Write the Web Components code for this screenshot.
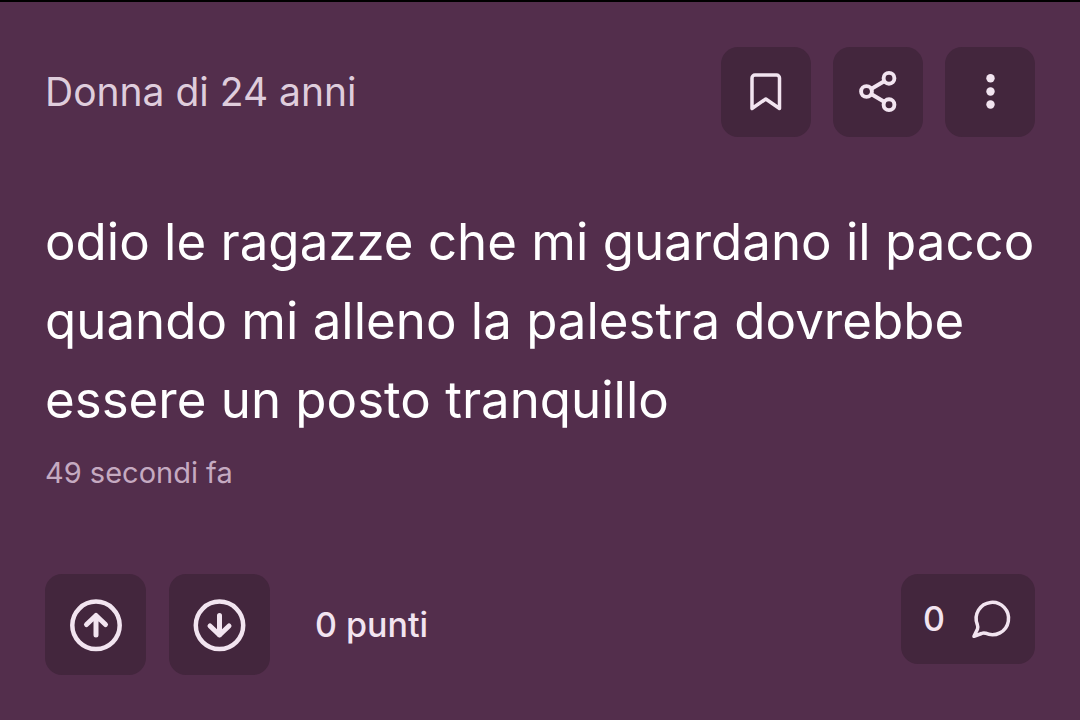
<!DOCTYPE html>
<html lang="it">
<head>
<meta charset="utf-8">
<meta name="viewport" content="width=device-width, initial-scale=1">
<title>Donna di 24 anni</title>
<style>
    body {
        margin: 0;
        min-height: 100vh;
        background: #532e4c;
        color: #fff;
        font-family: Inter, "Liberation Sans", sans-serif;
    }
</style>
</head>
<body>
<post-card>
    <span slot="author">Donna di 24 anni</span>
    <icon-button slot="actions" icon="bookmark" label="Salva"></icon-button>
    <icon-button slot="actions" icon="share" label="Condividi"></icon-button>
    <icon-button slot="actions" icon="more" label="Altro"></icon-button>
    odio le ragazze che mi guardano il pacco quando mi alleno la palestra dovrebbe essere un posto tranquillo
    <time slot="time">49 secondi fa</time>
    <vote-bar slot="votes" points="0"></vote-bar>
    <icon-button slot="comments" icon="comment" label="Commenti">0</icon-button>
</post-card>

<script>
// inner markup of every icon, with the size of its box
const icons = {
    bookmark: { size: 46, body: '<path d="M9 39.500V9a3 3 0 0 1 3-3h21.500a3 3 0 0 1 3 3V39.500L22.800 30z"/>' },
    share: { size: 46, body: '<g stroke-width="3.900"><circle cx="34" cy="9.300" r="5.400"/><circle cx="11.500" cy="22.500" r="5.400"/><circle cx="34" cy="35.700" r="5.400"/><path d="M16.500 19.700l12.700-7.500M16.500 25.300l12.700 7.500"/></g>' },
    more: { size: 46, body: '<g fill="currentColor" stroke="none"><circle cx="23.500" cy="9.300" r="4.200"/><circle cx="23.500" cy="22.500" r="4.200"/><circle cx="23.500" cy="35.500" r="4.200"/></g>' },
    comment: { size: 46, body: '<path d="M10.300 28.500A16.200 16.200 0 1 1 18.500 37.200Q16.500 36.600 14.500 37.500L7 40.300L10.500 33Q11.200 31 10.300 28.500z"/>' },
    up: { size: 56, body: '<g stroke-width="4.500"><circle cx="28" cy="28.300" r="23.700"/><path stroke-width="5" d="M28 38V18.500M18.500 27.500L28 18.500l9.500 9"/></g>' },
    down: { size: 56, body: '<g stroke-width="4.500"><circle cx="27.500" cy="28.300" r="23.700"/><path stroke-width="5" d="M27.500 18.500v19.500M18 29l9.500 9l9.500-9"/></g>' }
};

const buttonTemplate = document.createElement('template');
buttonTemplate.innerHTML = `
    <style>
        :host {
            display: block;
        }
        button {
            display: flex;
            align-items: center;
            justify-content: center;
            gap: 22px;
            box-sizing: border-box;
            min-width: 90px;
            height: 90px;
            padding: 0 22px;
            border: none;
            border-radius: 17px;
            background: #43263d;
            color: #f2e4f0;
            font: 500 34px/40px Inter, "Liberation Sans", sans-serif;
            cursor: pointer;
        }
        :host([large]) button {
            min-width: 101px;
            height: 101px;
        }
        svg {
            display: block;
            flex: none;
            fill: none;
            stroke: currentColor;
            stroke-width: 3.500;
            stroke-linecap: round;
            stroke-linejoin: round;
        }
    </style>
    <button type="button"><slot></slot><svg aria-hidden="true"></svg></button>`;

class IconButton extends HTMLElement {
    constructor () {
        super();
        this._shadowRoot = this.attachShadow({ mode: 'open' });
        this._shadowRoot.appendChild(buttonTemplate.content.cloneNode(true));
        this.buttonNode = this._shadowRoot.querySelector('button');
        this.svgNode = this._shadowRoot.querySelector('svg');
    }
    static get observedAttributes () {
        return ['icon', 'label'];
    }
    attributeChangedCallback (name, oldVal, newVal) {
        switch (name) {
            case 'icon': {
                const icon = icons[newVal];
                this.svgNode.setAttribute('width', icon.size);
                this.svgNode.setAttribute('height', icon.size);
                this.svgNode.setAttribute('viewBox', `0 0 ${icon.size} ${icon.size}`);
                this.svgNode.innerHTML = icon.body;
                break;
            }
            case 'label':
                this.buttonNode.setAttribute('aria-label', newVal);
                break;
        }
    }
}

const voteTemplate = document.createElement('template');
voteTemplate.innerHTML = `
    <style>
        :host {
            display: flex;
            align-items: center;
            gap: 23px;
        }
        output {
            margin-left: 22px;
            color: #f2e4f0;
            font-size: 34px;
            font-weight: 500;
            line-height: 40px;
        }
    </style>
    <icon-button large icon="up" label="Vota a favore"></icon-button>
    <icon-button large icon="down" label="Vota contro"></icon-button>
    <output></output>`;

class VoteBar extends HTMLElement {
    constructor () {
        super();
        this._shadowRoot = this.attachShadow({ mode: 'open' });
        this._shadowRoot.appendChild(voteTemplate.content.cloneNode(true));
        this.outputNode = this._shadowRoot.querySelector('output');
        const [up, down] = this._shadowRoot.querySelectorAll('icon-button');
        up.addEventListener('click', () => { this.points += 1; });
        down.addEventListener('click', () => { this.points -= 1; });
    }
    static get observedAttributes () {
        return ['points'];
    }
    attributeChangedCallback () {
        this.outputNode.textContent = `${this.points} punti`;
    }
    get points () {
        return parseInt(this.getAttribute('points')) || 0;
    }
    set points (value) {
        this.setAttribute('points', value);
    }
}

const cardTemplate = document.createElement('template');
cardTemplate.innerHTML = `
    <style>
        :host {
            display: block;
        }
        article {
            padding: 45px;
            border-top: 2px solid #000;
        }
        header, footer, .actions {
            display: flex;
        }
        header {
            align-items: center;
            justify-content: space-between;
        }
        .author {
            color: #dfcddc;
            font-size: 39px;
            line-height: 48px;
        }
        .actions {
            gap: 22px;
        }
        p {
            margin: 65px 0 0;
            font-size: 51px;
            line-height: 79px;
        }
        .time {
            margin-top: 14px;
            color: #c5aac1;
            font-size: 29px;
            line-height: 40px;
        }
        footer {
            align-items: flex-start;
            justify-content: space-between;
            margin-top: 81px;
        }
    </style>
    <article>
        <header>
            <div class="author"><slot name="author"></slot></div>
            <div class="actions"><slot name="actions"></slot></div>
        </header>
        <p><slot></slot></p>
        <div class="time"><slot name="time"></slot></div>
        <footer>
            <slot name="votes"></slot>
            <slot name="comments"></slot>
        </footer>
    </article>`;

class PostCard extends HTMLElement {
    constructor () {
        super();
        this.attachShadow({ mode: 'open' }).appendChild(cardTemplate.content.cloneNode(true));
    }
}

self.customElements.define('icon-button', IconButton);
self.customElements.define('vote-bar', VoteBar);
self.customElements.define('post-card', PostCard);
</script>
</body>
</html>
